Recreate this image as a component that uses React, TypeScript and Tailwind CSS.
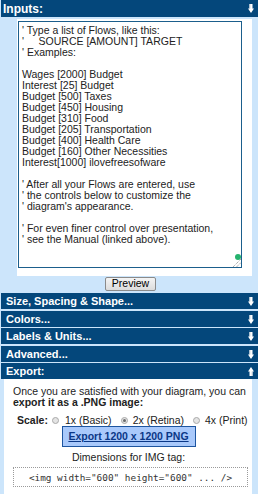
import React from "react";

const inputLines = [
  "' Type a list of Flows, like this:",
  "'     SOURCE [AMOUNT] TARGET",
  "' Examples:",
  "",
  "Wages [2000] Budget",
  "Interest [25] Budget",
  "Budget [500] Taxes",
  "Budget [450] Housing",
  "Budget [310] Food",
  "Budget [205] Transportation",
  "Budget [400] Health Care",
  "Budget [160] Other Necessities",
  "Interest[1000] ilovefreesofware",
  "",
  "' After all your Flows are entered, use",
  "' the controls below to customize the",
  "' diagram's appearance.",
  "",
  "' For even finer control over presentation,",
  "' see the Manual (linked above).",
];

function Arrow({ up = false }: { up?: boolean }) {
  return (
    <svg
      width="6"
      height="9"
      viewBox="0 0 6 9"
      className={up ? "rotate-180" : ""}
    >
      <path d="M1.5 0h3v4.5H6L3 9 0 4.5h1.5z" fill="#ffffff" />
      <path d="M1.5 0h1v4.5H1.5z" fill="#d6dde4" />
    </svg>
  );
}

function Bar({
  title,
  up = false,
  className = "",
}: {
  title: string;
  up?: boolean;
  className?: string;
}) {
  return (
    <div
      className={`ml-px flex h-4 items-center justify-between bg-[#04477b] pl-[5px] pr-[4px] text-[11px] font-bold text-white ${className}`}
    >
      <span>{title}</span>
      <Arrow up={up} />
    </div>
  );
}

function Radio({ checked = false }: { checked?: boolean }) {
  return (
    <span className="flex h-[7px] w-[7px] items-center justify-center rounded-full border border-[#a9a9a9] bg-[#e4e4e4]">
      {checked && <span className="h-[3px] w-[3px] rounded-full bg-[#6b6b6b]" />}
    </span>
  );
}

export default function App() {
  return (
    <div className="h-[494px] w-[258px] overflow-hidden bg-[#cce5fb] font-['Liberation_Sans',Arial,sans-serif] text-[10.5px] text-[#222]">
      <div className="ml-px flex h-[17px] items-center justify-between bg-[#04477b] pl-[2px] pr-[4px] text-[12px] font-bold text-white">
        <span>Inputs:</span>
        <Arrow />
      </div>

      <div className="pl-[17px] pr-[6px] pt-[2px]">
        <div className="h-[257px] bg-white pl-px pt-[2px]">
          <div className="relative h-[247px] w-[224px] border border-[#1b5e8c] pl-[3px] pt-[3px] leading-[11px]">
            {inputLines.map((line, i) => (
              <div key={i} className="h-[11px] whitespace-pre">
                {line}
              </div>
            ))}
            <span className="absolute bottom-[7px] right-0 h-[6px] w-[6px] rounded-full bg-[#26b36e]" />
            <svg
              width="9"
              height="8"
              viewBox="0 0 9 8"
              className="absolute bottom-0 right-0"
            >
              <path d="M1 8 L9 0" stroke="#6d6d6d" strokeWidth="0.8" strokeDasharray="1 1" />
              <path d="M4.5 8 L9 3.5" stroke="#6d6d6d" strokeWidth="0.8" strokeDasharray="1 1" />
            </svg>
          </div>
        </div>
      </div>

      <div className="mt-px flex justify-center pl-[3px]">
        <button
          type="button"
          className="flex h-[14px] w-[51px] items-center justify-center rounded-[2px] border border-[#8a8a8a] bg-gradient-to-b from-[#f4f4f4] to-[#dcdcdc] text-[10.5px] text-black"
        >
          Preview
        </button>
      </div>

      <Bar title="Size, Spacing & Shape..." className="mt-[2px]" />
      <Bar title="Colors..." className="mt-[2px]" />
      <Bar title="Labels & Units..." className="mt-px" />
      <Bar title="Advanced..." className="mt-[2px]" />
      <Bar title="Export:" up className="mt-px" />

      <div className="ml-[4px] mr-[6px] h-[120px] bg-white pl-[9px] pr-[4px] pt-[7px] leading-[11px]">
        <div className="whitespace-nowrap">
          Once you are satisfied with your diagram, you can
        </div>
        <div className="whitespace-nowrap font-bold">export it as a .PNG image:</div>

        <div className="mt-[6px] flex h-[12px] items-center whitespace-nowrap pl-[4px]">
          <span className="font-bold">Scale:</span>
          <span className="ml-[4px]">
            <Radio />
          </span>
          <span className="ml-[6px]">1x (Basic)</span>
          <span className="ml-[9px]">
            <Radio checked />
          </span>
          <span className="ml-[5px]">2x (Retina)</span>
          <span className="ml-[9px]">
            <Radio />
          </span>
          <span className="ml-[5px]">4x (Print)</span>
        </div>

        <div className="flex justify-center pr-[4px]">
          <button
            type="button"
            className="flex h-[21px] w-[134px] items-center justify-center border border-[#1d55a0] bg-[#a9c9fb] text-[10.5px] font-bold text-[#0a3787] underline"
          >
            Export 1200 x 1200 PNG
          </button>
        </div>

        <div className="mt-[5px] text-center pr-[4px]">Dimensions for IMG tag:</div>

        <div className="mt-[4px] flex h-[20px] items-center justify-center border border-dotted border-[#9a9a9a] font-['DejaVu_Sans_Mono',monospace] text-[9.4px] text-[#333]">
          {'<img width="600" height="600" ... />'}
        </div>
      </div>
    </div>
  );
}
